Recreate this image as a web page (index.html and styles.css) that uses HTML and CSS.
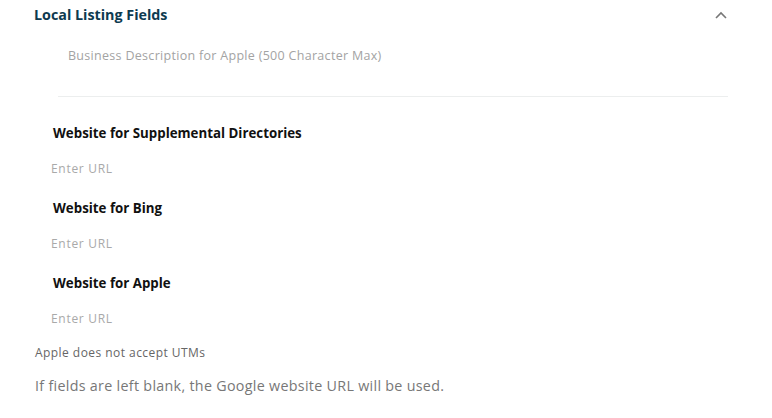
FILE: index.html
```html
<!DOCTYPE html>
<html>
<head>
<meta charset="utf-8">
<link rel="stylesheet" href="styles.css">
</head>
<body>
<section class="panel">
  <header class="panel-head">
    <h2 class="panel-title">Local Listing Fields</h2>
    <svg class="chevron" width="14" height="10" viewBox="0 0 14 10"><path d="M2 8 L7 3 L12 8" fill="none" stroke="#777" stroke-width="1.6"/></svg>
  </header>
  <div class="desc">
    <div class="desc-placeholder">Business Description for Apple (500 Character Max)</div>
  </div>
  <div class="field">
    <div class="field-label">Website for Supplemental Directories</div>
    <div class="field-input">Enter URL</div>
  </div>
  <div class="field">
    <div class="field-label">Website for Bing</div>
    <div class="field-input">Enter URL</div>
  </div>
  <div class="field">
    <div class="field-label">Website for Apple</div>
    <div class="field-input">Enter URL</div>
  </div>
  <p class="hint">Apple does not accept UTMs</p>
  <p class="note">If fields are left blank, the Google website URL will be used.</p>
</section>
</body>
</html>
```
FILE: styles.css
```css
html, body { margin: 0; padding: 0; background: #fff; }
body { font-family: "Open Sans", "Noto Sans", sans-serif; width: 772px; height: 418px; overflow: hidden; }
.panel { padding: 0 44px 0 34px; }
.panel-head { display: flex; justify-content: space-between; align-items: center; height: 29px; }
.panel-title { margin: 0; font-size: 14.3px; font-weight: 700; color: #0e3a4f; letter-spacing: 0; }
.desc { margin-left: 24px; border-bottom: 1px solid #eceeee; height: 67px; }
.desc-placeholder { padding: 18px 0 0 10px; font-size: 12.5px; color: #a3a3a3; letter-spacing: 0.3px; }
.field { padding-left: 19px; }
.field-label { font-size: 13.3px; font-weight: 700; color: #111; margin-top: 26px; line-height: 20px; }
.field-input { font-size: 12px; color: #a9a9a9; margin-left: -2px; margin-top: 18px; line-height: 16px; letter-spacing: 0.7px; }
.field + .field .field-label { margin-top: 21px; }
.hint { margin: 18px 0 0 1px; font-size: 12px; color: #666; line-height: 16px; letter-spacing: 0.45px; }
.note { margin: 15px 0 0 1px; font-size: 14.3px; color: #777; line-height: 20px; letter-spacing: 0.3px; }
```
